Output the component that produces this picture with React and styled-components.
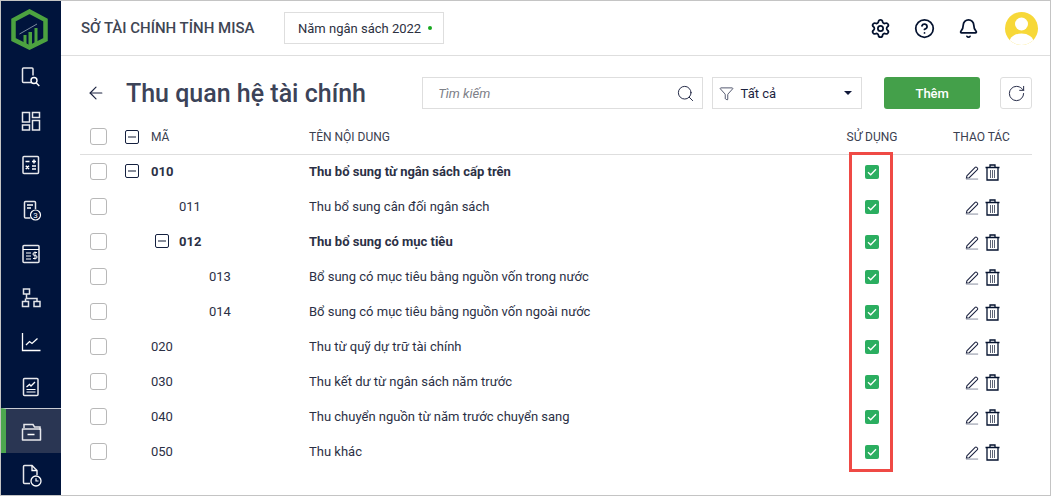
import React from "react";
import styled, { createGlobalStyle } from "styled-components";
import { Settings, CircleHelp, Bell, Search, Funnel, RotateCw, ArrowLeft } from "lucide-react";

const GlobalStyle = createGlobalStyle`
  html, body { margin: 0; padding: 0; background: #fff; }
  * { box-sizing: border-box; }
  body { font-family: Roboto, "Liberation Sans", sans-serif; color: #1c2340; }
`;

const Frame = styled.div`
  width: 1051px;
  height: 496px;
  border: 1px solid #c4c4c4;
  display: flex;
  overflow: hidden;
`;

const Sidebar = styled.nav`
  width: 60px;
  flex: none;
  background: #00143c;
  display: flex;
  flex-direction: column;
`;

const LogoBox = styled.div`
  height: 53px;
  flex: none;
  padding: 3px 3px 0 0;
  display: flex;
  align-items: center;
  justify-content: center;
`;

const NavItem = styled.div`
  height: 44.3px;
  flex: none;
  display: flex;
  align-items: center;
  justify-content: center;
  border-left: 5px solid ${(p) => (p.$active ? "#4ca64f" : "transparent")};
  border-top: ${(p) => (p.$active ? "1px solid #c9ccd4" : "none")};
  background: ${(p) => (p.$active ? "#2a3653" : "transparent")};
  padding-right: 5px;
  padding-top: 1px;
`;

const Main = styled.div`
  flex: 1;
  min-width: 0;
  display: flex;
  flex-direction: column;
`;

const Header = styled.header`
  height: 55px;
  flex: none;
  border-bottom: 1px solid #dedede;
  display: flex;
  align-items: center;
  padding: 0 12px 0 20px;
`;

const OrgName = styled.div`
  font-size: 15px;
  font-weight: 500;
  color: #3f4654;
  width: 203px;
  white-space: nowrap;
`;

const YearBox = styled.div`
  width: 160px;
  height: 32px;
  border: 1px solid #dedede;
  display: flex;
  align-items: center;
  padding-left: 13px;
  gap: 7px;
  font-size: 13px;
  color: #2c3040;
`;

const Dot = styled.span`
  width: 4px;
  height: 4px;
  border-radius: 50%;
  background: #17a81f;
`;

const HeaderIcons = styled.div`
  margin-left: auto;
  display: flex;
  align-items: center;
  color: #04122f;
`;

const HeaderIcon = styled.span`
  display: flex;
  width: 44px;
  justify-content: center;
`;

const Avatar = styled.div`
  width: 33px;
  height: 33px;
  margin-left: 15px;
  border-radius: 50%;
  background: #f7d838;
  overflow: hidden;
`;

const Content = styled.div`
  flex: 1;
  padding: 21px 18px 0 19px;
  min-height: 0;
`;

const Toolbar = styled.div`
  display: flex;
  align-items: center;
  height: 32px;
  margin-bottom: 11px;
`;

const BackButton = styled.span`
  display: flex;
  width: 46px;
  padding-left: 6px;
  color: #1c2340;
`;

const Title = styled.h1`
  margin: 0;
  width: 297px;
  font-size: 25px;
  font-weight: 500;
  color: #3c4358;
  white-space: nowrap;
`;

const SearchBox = styled.div`
  width: 281px;
  height: 32px;
  border: 1px solid #dedede;
  display: flex;
  align-items: center;
  padding: 0 7px 0 15px;
  justify-content: space-between;
  color: #1c2340;
`;

const Placeholder = styled.span`
  font-size: 13px;
  font-style: italic;
  color: #7d8088;
`;

const FilterBox = styled.div`
  width: 151px;
  height: 32px;
  margin-left: 9px;
  border: 1px solid #dedede;
  display: flex;
  align-items: center;
  padding: 0 9px 0 6px;
  gap: 7px;
  font-size: 13px;
  color: #1c2340;
`;

const Caret = styled.span`
  margin-left: auto;
  width: 0;
  height: 0;
  border-left: 4px solid transparent;
  border-right: 4px solid transparent;
  border-top: 4px solid #10183a;
`;

const AddButton = styled.button`
  width: 96px;
  height: 32px;
  margin-left: 22px;
  border: none;
  border-radius: 3px;
  background: #44a04a;
  color: #fff;
  font-family: inherit;
  font-size: 13px;
  font-weight: 500;
`;

const RefreshButton = styled.button`
  width: 32px;
  height: 32px;
  margin-left: 20px;
  border: 1px solid #dedede;
  border-radius: 3px;
  background: #fff;
  color: #1c2340;
  display: flex;
  align-items: center;
  justify-content: center;
  padding: 0;
`;

const Table = styled.div`
  position: relative;
`;

const Row = styled.div`
  display: grid;
  grid-template-columns: 45px 184px 512px 100px 111px;
  height: 35px;
  align-items: center;
  padding-bottom: 3px;
  font-size: 13px;
  color: #2b3045;
  font-weight: ${(p) => (p.$bold ? 700 : 400)};
`;

const HeadRow = styled(Row)`
  padding-bottom: 1px;
  font-size: 12px;
  color: #3a4050;
  border-bottom: 1px solid #dedede;
`;

const CheckCell = styled.div`
  padding-left: 10px;
  display: flex;
`;

const Checkbox = styled.span`
  width: 17px;
  height: 17px;
  border: 1px solid #b8b8b8;
  border-radius: 3px;
  background: #fff;
`;

const CodeCell = styled.div`
  display: flex;
  align-items: center;
  padding-left: ${(p) => p.$indent}px;
`;

const Toggle = styled.span`
  width: 14px;
  height: 14px;
  flex: none;
  border: 1px solid #14203f;
  border-radius: 2px;
  margin-right: ${(p) => p.$gap}px;
  display: flex;
  align-items: center;
  justify-content: center;
  &::before {
    content: "";
    width: 8px;
    height: 2px;
    background: #878c99;
  }
`;

const Center = styled.div`
  display: flex;
  justify-content: center;
  padding-left: 2px;
`;

const ActionHead = styled(Center)`
  padding-left: 10px;
`;

const Actions = styled(Center)`
  padding-left: 11px;
  margin-top: 3px;
  align-items: center;
  gap: 5px;
  color: #04122f;
`;

const Used = styled.span`
  width: 14px;
  height: 14px;
  margin-top: 2px;
  border-radius: 2px;
  background: #2bae60;
  display: flex;
  align-items: center;
  justify-content: center;
`;

const Highlight = styled.div`
  position: absolute;
  left: 769px;
  top: 32px;
  width: 44px;
  height: 320px;
  border: 3px solid #ef4a45;
  pointer-events: none;
`;

const Ico = ({ children }) => (
  <svg width="24" height="24" viewBox="0 0 24 24" fill="none" stroke="#fff" strokeWidth="1.3">
    {children}
  </svg>
);

const navIcons = [
  <Ico key="a">
    <path d="M13 17.500H4.500a1 1 0 0 1-1-1V4a1 1 0 0 1 1-1h8.500a1 1 0 0 1 1 1v6.500" stroke="#e7e8ec" strokeWidth="1.500" />
    <circle cx="15" cy="15.500" r="3" strokeWidth="1.400" />
    <path d="M17.300 18l3 3" strokeWidth="1.400" />
  </Ico>,
  <Ico key="b">
    <g stroke="#e7e8ec" strokeWidth="1.500">
      <rect x="3.500" y="3.500" width="7" height="9.500" />
      <rect x="13.500" y="3.500" width="7" height="5" />
      <rect x="3.500" y="16" width="7" height="5" />
      <rect x="13.500" y="11.500" width="7" height="9.500" />
    </g>
  </Ico>,
  <Ico key="c">
    <rect x="4" y="3.500" width="15.500" height="17" rx="1" stroke="#e7e8ec" strokeWidth="1.500" />
    <path d="M6.500 8.500h4M13 8.500h4M15 6.500v4M6.800 12.800l3.200 3.200M10 12.800l-3.200 3.200M13 13h4M13 16h4" strokeWidth="1.500" />
  </Ico>,
  <Ico key="d">
    <path d="M11.500 20H6.500a1 1 0 0 1-1-1V4.500a1 1 0 0 1 1-1h9a1 1 0 0 1 1 1V11" stroke="#e7e8ec" strokeWidth="1.500" />
    <path d="M8 7h6M8 10h4" strokeWidth="1.500" />
    <circle cx="16.500" cy="17" r="5" strokeWidth="1.200" />
    <text x="16.500" y="20" fontSize="8" fontFamily="Roboto, sans-serif" fill="#fff" stroke="none" textAnchor="middle">3</text>
  </Ico>,
  <Ico key="e">
    <rect x="4" y="3.500" width="16" height="17" rx="1" stroke="#e7e8ec" strokeWidth="1.500" />
    <path d="M4 7.500h16M7 11h5M7 14h5M7 17h5" strokeWidth="1.200" />
    <path d="M18 10.500h-2.500a1.200 1.200 0 0 0 0 3h1a1.200 1.200 0 0 1 0 3H14M16 9.500v8" strokeWidth="1" />
  </Ico>,
  <Ico key="f">
    <g stroke="#e1e3e8" strokeWidth="1.500">
      <rect x="4.500" y="3" width="6" height="5" />
      <rect x="3.500" y="15.500" width="6" height="5" />
      <rect x="15" y="15.500" width="6" height="5" />
      <path d="M7.500 8v4.500h10.500v3M6.500 12.500v3" />
    </g>
  </Ico>,
  <Ico key="g">
    <path d="M3.500 3v17.500H21.500" strokeWidth="1.300" />
    <path d="M7 15l3.500-3.500 2.500 2 5.500-5" strokeWidth="1.300" />
  </Ico>,
  <Ico key="h">
    <rect x="4.500" y="3.500" width="14.500" height="17" rx="1" stroke="#e7e8ec" strokeWidth="1.500" />
    <path d="M7.500 12l3-2.500 1.500 1.500 4-4" strokeWidth="1.300" />
    <path d="M7.500 14.500h9M7.500 17h9" strokeWidth="1.200" />
  </Ico>,
  <Ico key="i">
    <path d="M5 8V4.500h9l1.500 2.500H21v3" stroke="#e7e8ec" strokeWidth="1.500" />
    <path d="M3.500 9h18v11h-18z" stroke="#e7e8ec" strokeWidth="1.500" strokeLinejoin="round" />
    <path d="M8.500 14.500h7" strokeWidth="1.500" />
  </Ico>,
  <Ico key="j">
    <path d="M11 20.500H5.500a1 1 0 0 1-1-1V3.500a1 1 0 0 1 1-1H13l5 5v4.500" stroke="#e7e8ec" strokeWidth="1.500" />
    <path d="M13 2.500v5h5" strokeWidth="1.300" />
    <circle cx="17" cy="18" r="5" strokeWidth="1.300" />
    <path d="M17 15.200V18h2.500" strokeWidth="1.200" />
  </Ico>,
];

const Logo = () => (
  <svg width="37" height="41" viewBox="0 0 37 41">
    <path d="M18.500 2.500 34.500 11v19.500L18.500 38.500 2.500 30.500V11z" fill="none" stroke="#4ca240" strokeWidth="4.500" />
    <path d="M12.500 36V26h3v10zM17.500 38V23H21v15zM23.500 35V19h3v16z" fill="#4ca240" />
    <path d="M8.500 25 26 15" stroke="#9ba8b8" strokeWidth="0.800" />
  </svg>
);

const PencilIcon = () => (
  <svg width="15" height="15" viewBox="0 0 16 16" fill="none" stroke="#1c2340" strokeWidth="1.100">
    <path d="M2 11.500 10.800 2.500a1.200 1.200 0 0 1 1.700 0l.7.700a1.200 1.200 0 0 1 0 1.700L4.500 13.500l-3 .5z" />
    <path d="M1 15h13" stroke="#8d93a3" />
  </svg>
);

const TrashIcon = () => (
  <svg width="15" height="17" viewBox="0 0 15 17" fill="none" stroke="#04122f" strokeWidth="1.300">
    <path d="M.5 3.500h14M5 3.500V1h5v2.500M2 3.500V16h11V3.500" />
    <path d="M5.500 6v8M7.500 6v8M9.500 6v8" stroke="#5c6375" strokeWidth="1" />
  </svg>
);

const CheckMark = () => (
  <svg width="10" height="8" viewBox="0 0 10 8" fill="none" stroke="#fff" strokeWidth="1.300">
    <path d="M1 4.200 3.700 6.800 9 1.300" />
  </svg>
);

const rows = [
  { code: "010", name: "Thu bổ sung từ ngân sách cấp trên", bold: true, toggle: true, indent: 0, gap: 12 },
  { code: "011", name: "Thu bổ sung cân đối ngân sách", indent: 54 },
  { code: "012", name: "Thu bổ sung có mục tiêu", bold: true, toggle: true, indent: 30, gap: 10 },
  { code: "013", name: "Bổ sung có mục tiêu bằng nguồn vốn trong nước", indent: 84 },
  { code: "014", name: "Bổ sung có mục tiêu bằng nguồn vốn ngoài nước", indent: 84 },
  { code: "020", name: "Thu từ quỹ dự trữ tài chính", indent: 26 },
  { code: "030", name: "Thu kết dư từ ngân sách năm trước", indent: 26 },
  { code: "040", name: "Thu chuyển nguồn từ năm trước chuyển sang", indent: 26 },
  { code: "050", name: "Thu khác", indent: 26 },
];

export default function App() {
  return (
    <>
      <GlobalStyle />
      <Frame>
        <Sidebar>
          <LogoBox>
            <Logo />
          </LogoBox>
          {navIcons.map((icon, i) => (
            <NavItem key={i} $active={i === 8}>
              {icon}
            </NavItem>
          ))}
        </Sidebar>
        <Main>
          <Header>
            <OrgName>SỞ TÀI CHÍNH TỈNH MISA</OrgName>
            <YearBox>
              Năm ngân sách 2022 <Dot />
            </YearBox>
            <HeaderIcons>
              <HeaderIcon>
                <Settings size={21} strokeWidth={2} />
              </HeaderIcon>
              <HeaderIcon>
                <CircleHelp size={21} strokeWidth={2} />
              </HeaderIcon>
              <HeaderIcon>
                <Bell size={21} strokeWidth={2} />
              </HeaderIcon>
              <Avatar>
                <svg width="33" height="33" viewBox="0 0 33 33" fill="#fff">
                  <circle cx="16.500" cy="12" r="6.500" />
                  <ellipse cx="16.500" cy="30" rx="12" ry="8.500" />
                </svg>
              </Avatar>
            </HeaderIcons>
          </Header>
          <Content>
            <Toolbar>
              <BackButton>
                <ArrowLeft size={20} strokeWidth={1.4} />
              </BackButton>
              <Title>Thu quan hệ tài chính</Title>
              <SearchBox>
                <Placeholder>Tìm kiếm</Placeholder>
                <Search size={19} strokeWidth={1.2} />
              </SearchBox>
              <FilterBox>
                <Funnel size={15} strokeWidth={1.2} />
                Tất cả
                <Caret />
              </FilterBox>
              <AddButton>Thêm</AddButton>
              <RefreshButton>
                <RotateCw size={19} strokeWidth={1.2} />
              </RefreshButton>
            </Toolbar>
            <Table>
              <HeadRow>
                <CheckCell>
                  <Checkbox />
                </CheckCell>
                <CodeCell $indent={0}>
                  <Toggle $gap={12} />
                  MÃ
                </CodeCell>
                <div>TÊN NỘI DUNG</div>
                <Center>SỬ DỤNG</Center>
                <ActionHead>THAO TÁC</ActionHead>
              </HeadRow>
              {rows.map((row) => (
                <Row key={row.code} $bold={row.bold}>
                  <CheckCell>
                    <Checkbox />
                  </CheckCell>
                  <CodeCell $indent={row.indent}>
                    {row.toggle && <Toggle $gap={row.gap} />}
                    {row.code}
                  </CodeCell>
                  <div>{row.name}</div>
                  <Center>
                    <Used>
                      <CheckMark />
                    </Used>
                  </Center>
                  <Actions>
                    <PencilIcon />
                    <TrashIcon />
                  </Actions>
                </Row>
              ))}
              <Highlight />
            </Table>
          </Content>
        </Main>
      </Frame>
    </>
  );
}
